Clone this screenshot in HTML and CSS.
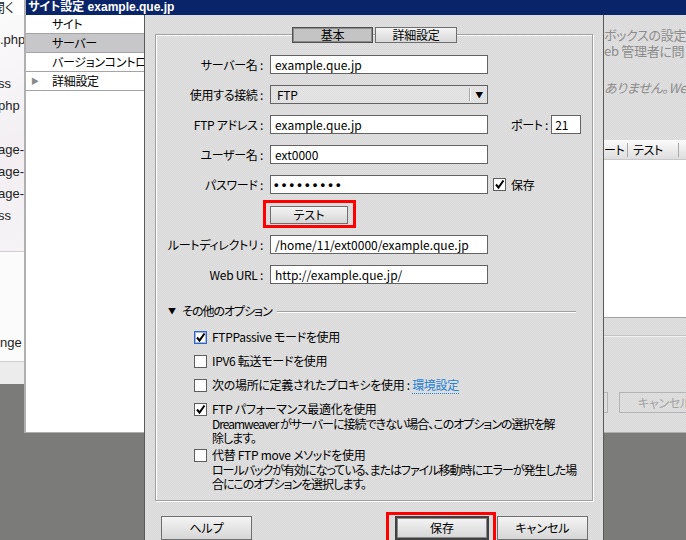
FILE: index.html
```html
<!DOCTYPE html>
<html lang="ja">
    <head>
        <meta charset="UTF-8">
        <title>サイト設定</title>
        <link rel="stylesheet" href="styles.css">
    </head>
    <body>
        <!-- 背面のファイルパネル -->
        <div class="files">
            <div class="files-top">開く</div>
            <ul class="file-list">
                <li>.php</li>
                <li></li>
                <li class="cut">ss</li>
                <li class="cut">php</li>
                <li></li>
                <li class="cut">age-</li>
                <li class="cut">age-</li>
                <li class="cut">age-</li>
                <li class="cut">ss</li>
            </ul>
            <div class="files-lower">nge</div>
            <div class="files-foot"></div>
        </div>

        <!-- サイト設定ダイアログ -->
        <div class="site-win">
            <div class="site-title">サイト設定 example.que.jp</div>
            <div class="site-body">
                <ul class="cat-list">
                    <li>サイト</li>
                    <li class="sel">サーバー</li>
                    <li>バージョンコントロール</li>
                    <li><span class="tri">&#9654;</span>詳細設定</li>
                </ul>
                <div class="site-main">
                    <div class="behind">
                        <p class="note">ボックスの設定</p>
                        <p class="note">eb 管理者に問</p>
                        <p class="note note-it">ありません。Web</p>
                        <div class="srv-table">
                            <div class="srv-head">
                                <span class="hcell hcell-1">ート</span>
                                <span class="hcell hcell-2">テスト</span>
                            </div>
                        </div>
                        <div class="behind-sep"></div>
                        <div class="behind-btns">
                            <span class="ghost-btn"></span>
                            <span class="ghost-btn ghost-cancel">キャンセル</span>
                        </div>
                    </div>
                </div>
            </div>
        </div>

        <!-- サーバー設定ダイアログ -->
        <div class="srv-win">
            <div class="tabs">
                <span class="tab tab-on">基本</span>
                <span class="tab">詳細設定</span>
            </div>
            <div class="group">
                <div class="form">
                    <div class="row">
                        <label class="lbl">サーバー名 :</label>
                        <input class="field" type="text" value="example.que.jp">
                    </div>
                    <div class="row">
                        <label class="lbl">使用する接続 :</label>
                        <div class="select">
                            <span class="select-val">FTP</span>
                            <span class="select-arrow">&#9660;</span>
                        </div>
                    </div>
                    <div class="row">
                        <label class="lbl">FTP アドレス :</label>
                        <input class="field" type="text" value="example.que.jp">
                        <label class="port-lbl">ポート :</label>
                        <input class="field port" type="text" value="21">
                    </div>
                    <div class="row">
                        <label class="lbl">ユーザー名 :</label>
                        <input class="field" type="text" value="ext0000">
                    </div>
                    <div class="row">
                        <label class="lbl">パスワード :</label>
                        <input class="field pw" type="text" value="&#8226;&#8226;&#8226;&#8226;&#8226;&#8226;&#8226;&#8226;&#8226;">
                        <span class="save-pw"><span class="cb on"><svg viewBox="0 0 11 11"><path d="M2 5.5 L4.5 8.5 L9.5 1.5"/></svg></span>保存</span>
                    </div>
                    <div class="row">
                        <span class="lbl"></span>
                        <button class="btn btn-test mark">テスト</button>
                    </div>
                    <div class="row">
                        <label class="lbl">ルートディレクトリ :</label>
                        <input class="field" type="text" value="/home/11/ext0000/example.que.jp">
                    </div>
                    <div class="row">
                        <label class="lbl">Web URL :</label>
                        <input class="field" type="text" value="http://example.que.jp/">
                    </div>
                </div>

                <div class="opt-head">
                    <span class="opt-tri">&#9660;</span>
                    <span>その他のオプション</span>
                    <span class="opt-line"></span>
                </div>

                <div class="opt-list">
                    <div class="opt">
                        <span class="cb on focus"><svg viewBox="0 0 11 11"><path d="M2 5.5 L4.5 8.5 L9.5 1.5"/></svg></span>
                        <span>FTPPassive モードを使用</span>
                    </div>
                    <div class="opt">
                        <span class="cb"></span>
                        <span>IPV6 転送モードを使用</span>
                    </div>
                    <div class="opt">
                        <span class="cb"></span>
                        <span>次の場所に定義されたプロキシを使用 : <a class="link" href="#">環境設定</a></span>
                    </div>
                    <div class="opt">
                        <span class="cb on"><svg viewBox="0 0 11 11"><path d="M2 5.5 L4.5 8.5 L9.5 1.5"/></svg></span>
                        <span>FTP パフォーマンス最適化を使用</span>
                    </div>
                    <p class="opt-desc">Dreamweaver がサーバーに接続できない場合、このオプションの選択を解<br>除します。</p>
                    <div class="opt opt-after">
                        <span class="cb"></span>
                        <span>代替 FTP move メソッドを使用</span>
                    </div>
                    <p class="opt-desc">ロールバックが有効になっている、またはファイル移動時にエラーが発生した場<br>合にこのオプションを選択します。</p>
                </div>
            </div>

            <div class="srv-buttons">
                <button class="btn btn-wide">ヘルプ</button>
                <button class="btn btn-wide btn-default mark mark-save">保存</button>
                <button class="btn btn-wide">キャンセル</button>
            </div>
        </div>
    </body>
</html>
```

FILE: styles.css
```css
* { box-sizing: border-box; }

html, body { margin: 0; }

body {
    position: relative;
    width: 686px;
    height: 540px;
    overflow: hidden;
    background-color: #7b7c79;
    font: 12px/14px "Noto Sans CJK JP", "Liberation Sans", sans-serif;
    font-feature-settings: "palt";
    letter-spacing: -0.3px;
    color: #000;
}

ul, p { margin: 0; padding: 0; list-style: none; }

/* 背面のファイルパネル */
.files {
    position: absolute;
    left: 0;
    top: 0;
    width: 24px;
    height: 386px;
    overflow: hidden;
    font-family: "Liberation Sans", "Noto Sans CJK JP", sans-serif;
    font-size: 13px;
    letter-spacing: 0;
    color: #1e1e1e;
    white-space: nowrap;
}

.files-top {
    height: 15px;
    line-height: 15px;
    margin-left: -8px;
    background: #fff;
}

.file-list {
    height: 237px;
    padding-top: 14px;
    background: linear-gradient(160deg, #fbfafb, #f2eef2 60%, #f6f3f6);
    border-bottom: 1px solid #cfcfcf;
}

.file-list li { height: 22px; line-height: 22px; }
.file-list li.cut { margin-left: -2px; }

.files-lower {
    height: 110px;
    padding-top: 84px;
    line-height: 14px;
    background: #fbfbfb;
    border-bottom: 1px solid #cfcfcf;
}

.files-foot { height: 22px; background: #ececec; }

/* サイト設定ダイアログ */
.site-win {
    position: absolute;
    left: 24px;
    top: 0;
    width: 662px;
    height: 433px;
    display: flex;
    flex-direction: column;
    border-left: 2px solid #b0b0b0;
    border-bottom: 1px solid #b0b0b0;
    background: #dcdcdc repeating-conic-gradient(#d8d8d8 0 25%, #e1e1e1 0 50%) 0 0/2px 2px;
}

.site-title {
    height: 15px;
    padding-left: 2px;
    background: #0a246a;
    color: #fff;
    font-family: "Liberation Sans", "Noto Sans CJK JP", sans-serif;
    font-size: 12px;
    font-weight: bold;
    line-height: 15px;
    letter-spacing: 0;
    white-space: nowrap;
}

.site-body { flex: 1; display: flex; }

.cat-list {
    width: 118px;
    background: #fff;
    white-space: nowrap;
    overflow: hidden;
}

.cat-list li {
    height: 19px;
    line-height: 18px;
    padding-left: 26px;
    border-bottom: 1px solid #a4a4a4;
    position: relative;
}

.cat-list li.sel { background: #c7c7c9; }

.tri {
    position: absolute;
    left: 5px;
    top: 0;
    font-size: 8px;
    color: #8a8a8a;
}

.site-main { flex: 1; display: flex; }

.behind {
    margin-left: auto;
    width: 82px;
    overflow: hidden;
    white-space: nowrap;
    color: #8c8c8c;
    font-size: 13px;
    padding-top: 13px;
}

.note { height: 16px; line-height: 14px; }
.note-it { margin-top: 21px; font-style: italic; }

.srv-table {
    height: 178px;
    margin-top: 43px;
    background: #fff;
    border-bottom: 1px solid #a0a0a0;
}

.srv-head {
    display: flex;
    height: 20px;
    background: linear-gradient(#fbfbfb, #dedede);
    border-bottom: 1px solid #c8c8c8;
    color: #000;
    font-size: 12px;
}

.hcell {
    height: 14px;
    margin-top: 3px;
    line-height: 14px;
    border-right: 1px solid #a8a8a8;
}

.hcell-1 { width: 24px; flex: none; }
.hcell-2 { width: 51px; flex: none; padding-left: 5px; }

.behind-sep {
    margin-top: 17px;
    border-top: 1px solid #c4c4c4;
    box-shadow: 0 1px 0 #f2f2f2;
}

.behind-btns { display: flex; margin-top: 56px; }

.ghost-btn {
    width: 4px;
    height: 21px;
    border: 1px solid #b4b4b4;
    border-left: none;
    flex: none;
}

.ghost-cancel {
    width: 80px;
    margin-left: 11px;
    border-left: 1px solid #b4b4b4;
    padding-left: 18px;
    line-height: 19px;
    font-size: 12px;
    color: #a4a4a4;
}

/* サーバー設定ダイアログ */
.srv-win {
    position: absolute;
    left: 144px;
    top: 15px;
    width: 460px;
    height: 540px;
    padding: 12px 10px 0;
    border-left: 1px solid #5a5a5a;
    border-right: 1px solid #5a5a5a;
    background: #dcdcdc repeating-conic-gradient(#d8d8d8 0 25%, #e1e1e1 0 50%) 0 0/2px 2px;
}

.tabs {
    position: relative;
    z-index: 1;
    display: flex;
    justify-content: center;
    gap: 2px;
    padding-left: 1px;
}

.tab {
    width: 82px;
    height: 16px;
    line-height: 14px;
    text-align: center;
    border: 1px solid #6e6e6e;
    background: linear-gradient(#f3f3f3, #d8d8d8);
}

.tab-on {
    width: 81px;
    background: #c4c4c4;
    border-color: #505050;
    box-shadow: inset 0 0 0 1px #8c8c8c;
}

.group {
    height: 467px;
    margin-top: -9px;
    padding-top: 20px;
    border: 1px solid #a0a0a0;
    box-shadow: inset 1px 1px 0 #fff, 1px 1px 0 #fff;
}

.form { display: flex; flex-direction: column; gap: 11px; }

.row { display: flex; align-items: center; height: 19px; }

.lbl {
    width: 110px;
    flex: none;
    padding-right: 3px;
    text-align: right;
    white-space: nowrap;
}

.field {
    width: 218px;
    height: 19px;
    margin: 0 0 0 4px;
    padding: 0 4px;
    border: 1px solid #636363;
    border-radius: 0;
    background: #fff;
    font: 12px/17px "Noto Sans CJK JP", "Liberation Sans", sans-serif;
    color: #000;
    outline: none;
}

.pw {
    font-family: "Liberation Sans", sans-serif;
    font-size: 13px;
    font-weight: bold;
    letter-spacing: 3.2px;
    padding-left: 3px;
}

.select {
    display: flex;
    align-items: center;
    width: 218px;
    height: 19px;
    margin-left: 4px;
    border: 1px solid #636363;
    background: #e2e2e2 repeating-conic-gradient(#dedede 0 25%, #e6e6e6 0 50%) 0 0/2px 2px;
}

.select-val { flex: 1; padding-left: 6px; }

.select-arrow {
    width: 17px;
    height: 13px;
    line-height: 13px;
    border-left: 1px solid #fafafa;
    box-shadow: -1px 0 0 #a8a8a8;
    text-align: center;
    font-size: 8px;
}

.port-lbl { margin-left: 23px; white-space: nowrap; }

.field.port { width: 30px; margin-left: 3px; padding: 0 3px; }

.save-pw { display: flex; align-items: center; gap: 5px; margin-left: 5px; }

.btn {
    height: 18px;
    padding: 0;
    border: 1px solid #6e6e6e;
    border-radius: 0;
    background: linear-gradient(#f4f4f4, #d6d6d6);
    font: 12px/14px "Noto Sans CJK JP", "Liberation Sans", sans-serif;
    font-feature-settings: "palt";
    color: #000;
}

.btn-test { width: 78px; margin-left: 4px; }

.mark { position: relative; }

.mark::after {
    content: "";
    position: absolute;
    top: -7px;
    right: -9px;
    bottom: -5px;
    left: -8px;
    border: 3px solid #f00;
}

/* その他のオプション */
.opt-head {
    display: flex;
    align-items: center;
    height: 14px;
    margin-top: 20px;
    padding-left: 12px;
    padding-right: 16px;
    letter-spacing: -1px;
}

.opt-tri { font-size: 8px; margin-right: 7px; }

.opt-line {
    flex: 1;
    margin-left: 5px;
    border-top: 1px solid #a0a0a0;
    box-shadow: 0 1px 0 #fff;
}

.opt-list {
    margin-top: 12px;
    padding-left: 38px;
    display: flex;
    flex-direction: column;
    gap: 10px;
}

.opt { display: flex; align-items: center; gap: 5px; height: 14px; white-space: nowrap; }

.opt-desc {
    margin: -9px 0 0 18px;
    line-height: 14px;
    letter-spacing: -1px;
    white-space: nowrap;
}

.opt-after { margin-top: -7px; }

.cb {
    width: 13px;
    height: 13px;
    flex: none;
    border: 1px solid #5e5e5e;
    background: #fff;
}

.cb svg { display: block; width: 11px; height: 11px; }

.cb path { fill: none; stroke: #000; stroke-width: 2; }

.cb.focus { border-color: #2f66c6; box-shadow: inset 0 0 0 1px #9cb8ea; }

.link {
    color: #1e82d8;
    text-decoration: none;
    border-bottom: 1px dotted #1e82d8;
}

/* 下部ボタン */
.srv-buttons {
    display: flex;
    gap: 8px;
    margin-top: 15px;
    padding: 0 5px 0 6px;
}

.btn-wide { width: 91px; height: 24px; }

.btn-default {
    width: 94px;
    margin-left: auto;
    border: 2px solid #404040;
    box-shadow: inset 0 0 0 1px #8a8a8a;
}

.mark-save::after { top: -6px; right: -9px; bottom: -6px; left: -11px; }
```
